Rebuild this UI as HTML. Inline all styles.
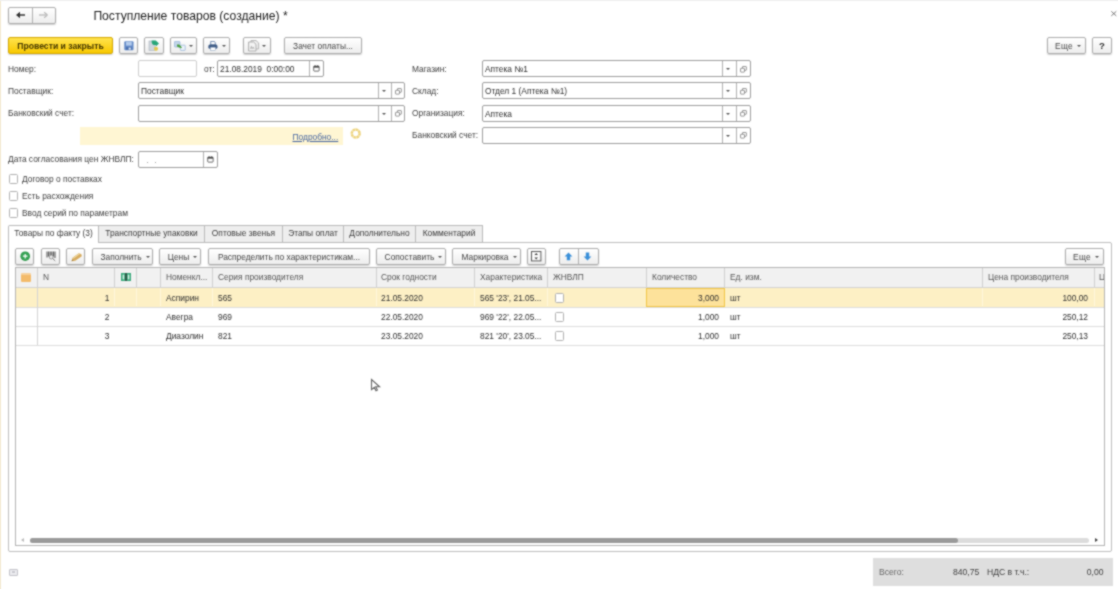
<!DOCTYPE html>
<html><head><meta charset="utf-8">
<style>
*{box-sizing:border-box;margin:0;padding:0}
html,body{width:1118px;height:589px;overflow:hidden;background:#fff}
body{position:relative;font-family:"Liberation Sans",sans-serif;font-size:8.4px;color:#404040}
#w{position:absolute;left:0;top:0;width:1118px;height:589px;overflow:hidden;background:#fff;filter:url(#bl)}
.a{position:absolute;white-space:nowrap}
.t{position:absolute;white-space:nowrap;line-height:10px;height:10px}
.btn{position:absolute;height:17px;border:1px solid #adadad;border-radius:2px;background:linear-gradient(#ffffff,#ededed);box-shadow:0 1px 1.5px rgba(0,0,0,.2);text-align:center;line-height:16.2px;white-space:nowrap;color:#464646}
.inp{position:absolute;height:17px;border:1px solid #9e9e9e;border-radius:2px;background:#fff;line-height:16.5px;padding-left:2px;white-space:nowrap;color:#2e2e2e}
.sep{position:absolute;top:0;bottom:0;width:1px;background:#b0b0b0}
.cb{position:absolute;width:9.6px;height:9.6px;border:1px solid #b0b0b0;border-radius:1.5px;background:#fff}
.tab{position:absolute;top:225px;height:18px;border:1px solid #bababa;border-left:none;background:#eeeeee;line-height:14.8px;text-align:center;color:#3c3c3c}
.hs{position:absolute;top:268px;height:20px;width:1px;background:#d0d0d0}
.h{position:absolute;top:272.3px;line-height:10px;color:#565656;white-space:nowrap}
.c{position:absolute;line-height:10px;color:#2e2e2e;white-space:nowrap}
.r{text-align:right}
.dd{display:inline-block;width:0;height:0;border-left:2px solid transparent;border-right:2px solid transparent;border-top:2.5px solid #555;vertical-align:middle;margin-left:4px;margin-top:-1px}
</style></head><body><svg width="0" height="0" style="position:absolute"><filter id="bl" x="0" y="0" width="100%" height="100%" color-interpolation-filters="sRGB"><feConvolveMatrix order="3" kernelMatrix="1 2 1 2 8 2 1 2 1" divisor="20" edgeMode="duplicate" preserveAlpha="true"/></filter></svg><div id="w">
<!-- left strip -->
<div class="a" style="left:0;top:0;width:1.3px;height:589px;background:#f3e9d0"></div>
<div class="a" style="left:0;top:0;width:1118px;height:1px;background:#efefef"></div>

<!-- nav -->
<div class="btn" style="left:8px;top:7px;width:48px;height:17px"><div class="sep" style="left:23px"></div>
<svg class="a" style="left:-0.8px;top:0px" width="46" height="14" viewBox="0 0 46 14"><path d="M10 7h7" stroke="#333" stroke-width="1.5" fill="none"/><path d="M8 7l4-3.2v6.4z" fill="#333"/><path d="M38.5 7h-7.5" stroke="#b9b9b9" stroke-width="1.3" fill="none"/><path d="M39.5 7l-3.4-2.7M39.5 7l-3.4 2.7" stroke="#b9b9b9" stroke-width="1.2" fill="none"/></svg></div>
<div class="a" style="left:93.4px;top:7.6px;font-size:12.15px;line-height:16px;color:#1c1c1c">Поступление товаров (создание) *</div>
<svg class="a" style="left:1110px;top:10px" width="8" height="8" viewBox="0 0 8 8"><path d="M1.3 1.3l5 4.6M6.3 1.3l-5 4.6" stroke="#6a6a6a" stroke-width="0.9" fill="none"/></svg>

<!-- toolbar -->
<div class="btn" style="left:8px;top:37px;width:105px;background:linear-gradient(#ffe34d,#f8c800);border-color:#d6a900;color:#453800;font-weight:bold;font-size:8.65px;line-height:17.4px">Провести и закрыть</div>
<div class="btn" style="left:119px;top:37px;width:19px"><svg class="a" style="left:4px;top:3px" width="10" height="10" viewBox="0 0 10 10"><rect x="0.3" y="0.3" width="9.2" height="9" rx="1" fill="#6289c7"/><rect x="2" y="0.8" width="5.8" height="3.8" fill="#b3cbec"/><rect x="2.2" y="6" width="5.4" height="3" fill="#4a6fae"/><rect x="4.6" y="6.6" width="2.2" height="2" fill="#dfe9f6"/></svg></div>
<div class="btn" style="left:144px;top:37px;width:20px"><svg class="a" style="left:3px;top:2px" width="12" height="12" viewBox="0 0 12 12"><rect x="1" y="1" width="6" height="9.4" fill="#cfd6dd" stroke="#aab3bd" stroke-width="0.6"/><path d="M3.6 0.6h4.2l0 -0.1 3.2 3-3.2 3v-1.6h-2.2c-1.2 0-2-1.4-2-4.3z" fill="#27a678"/><circle cx="8" cy="8.8" r="2.1" fill="#e2ca55"/></svg></div>
<div class="btn" style="left:170px;top:37px;width:27px"><svg class="a" style="left:3px;top:2.5px" width="12" height="10" viewBox="0 0 12 10"><rect x="0.4" y="0.4" width="5.6" height="5.6" rx="0.8" fill="#c3d5ea" stroke="#8fb0d6" stroke-width="0.7"/><rect x="6.4" y="4.2" width="4.8" height="5.2" rx="0.6" fill="#edf3fa" stroke="#8fb0d6" stroke-width="0.7"/><path d="M3 3.6h2.2l3 3.2-1.8.2-3.4-1.4z" fill="#4a9f3e"/></svg><span class="dd" style="position:absolute;right:3.2px;top:7.4px;margin:0"></span></div>
<div class="btn" style="left:203px;top:37px;width:27px"><svg class="a" style="left:3.8px;top:2.6px" width="10" height="10" viewBox="0 0 11 10" preserveAspectRatio="none"><path d="M3 0.4h4l1 1.4v2.2h-5z" fill="#fff" stroke="#4a6c9c" stroke-width="0.8"/><rect x="0.4" y="3.4" width="10" height="4.4" rx="1.6" fill="#3f5c86"/><rect x="2.8" y="6.2" width="5.4" height="3.4" fill="#fff" stroke="#7d95b6" stroke-width="0.5"/></svg><span class="dd" style="position:absolute;right:3.2px;top:7.4px;margin:0"></span></div>
<div class="btn" style="left:243px;top:37px;width:27.6px"><svg class="a" style="left:4px;top:1.6px" width="12" height="12" viewBox="0 0 12 12"><path d="M3 0.5h5l2.6 2.4v6h-7.6z" fill="#efefef" stroke="#b0b0b0" stroke-width="0.9"/><path d="M0.6 2h5l2.4 2.4v6.6h-7.4z" fill="#f4f4f4" stroke="#a6a6a6" stroke-width="0.9"/><path d="M1.8 8.8l1.5-3.4 1.3 2.2 .9-1.1 1.1 2.3z" fill="#b9b9b9"/></svg><span class="dd" style="position:absolute;right:3.2px;top:7.4px;margin:0"></span></div>
<div class="btn" style="left:284px;top:37px;width:78px">Зачет оплаты...</div>
<div class="btn" style="left:1047px;top:37px;width:39px;padding-left:3px;letter-spacing:0.35px">Еще<span class="dd"></span></div>
<div class="btn" style="left:1092px;top:37px;width:20px;font-weight:bold;font-size:9.6px;color:#333">?</div>

<!-- form left -->
<div class="t" style="left:8px;top:64px">Номер:</div>
<div class="inp" style="left:138px;top:60px;width:59px;border-color:#cdcdcd"></div>
<div class="t" style="left:204px;top:64px">от:</div>
<div class="inp" style="left:217px;top:60px;width:107px">21.08.2019&nbsp; 0:00:00<div class="sep" style="left:91px"></div><svg class="a" style="right:3.5px;top:4px" width="7" height="7" viewBox="0 0 8 8"><rect x="0.8" y="1.4" width="6.2" height="5.6" rx="0.8" fill="#fff" stroke="#444" stroke-width="0.9"/><rect x="0.8" y="1.2" width="6.2" height="1.8" fill="#444"/><path d="M2.4 0.2v1.4M5.4 0.2v1.4" stroke="#444" stroke-width="0.9"/></svg></div>
<div class="t" style="left:8px;top:86px">Поставщик:</div>
<div class="inp" style="left:138px;top:82.3px;width:267px">Поставщик<div class="sep" style="left:238.5px"></div><div class="sep" style="left:252px"></div><span class="dd" style="position:absolute;left:243px;top:7px;margin:0;border-top-color:#555"></span><svg class="a" style="left:256px;top:4.5px" width="7" height="7" viewBox="0 0 7 7"><rect x="2.4" y="0.5" width="4" height="3.8" rx="0.5" fill="#fff" stroke="#777" stroke-width="0.75"/><rect x="0.5" y="2.3" width="4" height="3.8" rx="0.5" fill="#fff" stroke="#777" stroke-width="0.75"/></svg></div>
<div class="t" style="left:8px;top:108px">Банковский счет:</div>
<div class="inp" style="left:138px;top:104.6px;width:267px"><div class="sep" style="left:238.5px"></div><div class="sep" style="left:252px"></div><span class="dd" style="position:absolute;left:243px;top:7px;margin:0;border-top-color:#555"></span><svg class="a" style="left:256px;top:4.5px" width="7" height="7" viewBox="0 0 7 7"><rect x="2.4" y="0.5" width="4" height="3.8" rx="0.5" fill="#fff" stroke="#777" stroke-width="0.75"/><rect x="0.5" y="2.3" width="4" height="3.8" rx="0.5" fill="#fff" stroke="#777" stroke-width="0.75"/></svg></div>
<div class="a" style="left:80px;top:127px;width:263px;height:18px;background:#fff6d3"></div>
<div class="t" style="left:292.5px;top:131.8px;color:#46659f;text-decoration:underline">Подробно...</div>
<svg class="a" style="left:349px;top:127px" width="13" height="13" viewBox="0 0 13 13"><circle cx="6.7" cy="6.5" r="3.9" fill="none" stroke="#f4e2a8" stroke-width="2.5"/><circle cx="6.7" cy="6.5" r="3.9" fill="none" stroke="#ecd27a" stroke-width="2.3" stroke-dasharray="1.6 1.46"/></svg>
<div class="t" style="left:8px;top:154px">Дата согласования цен ЖНВЛП:</div>
<div class="inp" style="left:138px;top:151px;width:80px;color:#8a8a8a"><span class="a" style="left:7.5px;top:0">.</span><span class="a" style="left:15.2px;top:0">.</span><div class="sep" style="left:64px"></div><svg class="a" style="right:3.5px;top:4px" width="7" height="7" viewBox="0 0 8 8"><rect x="0.8" y="1.4" width="6.2" height="5.6" rx="0.8" fill="#fff" stroke="#444" stroke-width="0.9"/><rect x="0.8" y="1.2" width="6.2" height="1.8" fill="#444"/><path d="M2.4 0.2v1.4M5.4 0.2v1.4" stroke="#444" stroke-width="0.9"/></svg></div>
<div class="cb" style="left:8.7px;top:174px"></div><div class="t" style="left:22px;top:174px">Договор о поставках</div>
<div class="cb" style="left:8.7px;top:191px"></div><div class="t" style="left:22px;top:191px">Есть расхождения</div>
<div class="cb" style="left:8.7px;top:208px"></div><div class="t" style="left:22px;top:208px">Ввод серий по параметрам</div>

<!-- form right -->
<div class="t" style="left:412px;top:64px">Магазин:</div>
<div class="inp" style="left:482px;top:60px;width:269px">Аптека №1<div class="sep" style="left:238.5px"></div><div class="sep" style="left:253px"></div><span class="dd" style="position:absolute;left:243px;top:7px;margin:0;border-top-color:#555"></span><svg class="a" style="left:257px;top:4.5px" width="7" height="7" viewBox="0 0 7 7"><rect x="2.4" y="0.5" width="4" height="3.8" rx="0.5" fill="#fff" stroke="#777" stroke-width="0.75"/><rect x="0.5" y="2.3" width="4" height="3.8" rx="0.5" fill="#fff" stroke="#777" stroke-width="0.75"/></svg></div>
<div class="t" style="left:412px;top:86px">Склад:</div>
<div class="inp" style="left:482px;top:82.3px;width:269px">Отдел 1 (Аптека №1)<div class="sep" style="left:238.5px"></div><div class="sep" style="left:253px"></div><span class="dd" style="position:absolute;left:243px;top:7px;margin:0;border-top-color:#555"></span><svg class="a" style="left:257px;top:4.5px" width="7" height="7" viewBox="0 0 7 7"><rect x="2.4" y="0.5" width="4" height="3.8" rx="0.5" fill="#fff" stroke="#777" stroke-width="0.75"/><rect x="0.5" y="2.3" width="4" height="3.8" rx="0.5" fill="#fff" stroke="#777" stroke-width="0.75"/></svg></div>
<div class="t" style="left:412px;top:108px">Организация:</div>
<div class="inp" style="left:482px;top:104.6px;width:269px">Аптека<div class="sep" style="left:238.5px"></div><div class="sep" style="left:253px"></div><span class="dd" style="position:absolute;left:243px;top:7px;margin:0;border-top-color:#555"></span><svg class="a" style="left:257px;top:4.5px" width="7" height="7" viewBox="0 0 7 7"><rect x="2.4" y="0.5" width="4" height="3.8" rx="0.5" fill="#fff" stroke="#777" stroke-width="0.75"/><rect x="0.5" y="2.3" width="4" height="3.8" rx="0.5" fill="#fff" stroke="#777" stroke-width="0.75"/></svg></div>
<div class="t" style="left:412px;top:130px">Банковский счет:</div>
<div class="inp" style="left:482px;top:126.6px;width:269px"><div class="sep" style="left:238.5px"></div><div class="sep" style="left:253px"></div><span class="dd" style="position:absolute;left:243px;top:7px;margin:0;border-top-color:#555"></span><svg class="a" style="left:257px;top:4.5px" width="7" height="7" viewBox="0 0 7 7"><rect x="2.4" y="0.5" width="4" height="3.8" rx="0.5" fill="#fff" stroke="#777" stroke-width="0.75"/><rect x="0.5" y="2.3" width="4" height="3.8" rx="0.5" fill="#fff" stroke="#777" stroke-width="0.75"/></svg></div>

<!-- tab panel -->
<div class="a" style="left:8px;top:242px;width:1104px;height:310px;border:1px solid #bebebe;border-radius:0 2px 2px 2px"></div>
<div class="tab" style="left:8px;width:91px;top:224.5px;height:18.5px;border-left:1px solid #bababa;border-bottom:none;background:#fff;line-height:15.2px;border-radius:2px 0 0 0">Товары по факту (3)</div>
<div class="tab" style="left:99px;width:106px">Транспортные упаковки</div>
<div class="tab" style="left:205px;width:78px">Оптовые звенья</div>
<div class="tab" style="left:283px;width:61px">Этапы оплат</div>
<div class="tab" style="left:344px;width:72px">Дополнительно</div>
<div class="tab" style="left:416px;width:67px">Комментарий</div>

<!-- table toolbar -->
<div class="btn" style="left:15px;top:248px;width:19px"><svg class="a" style="left:3.7px;top:2.4px" width="11" height="11" viewBox="0 0 11 11"><circle cx="5.2" cy="5.2" r="4.8" fill="#2c9549"/><circle cx="5.2" cy="5.2" r="3.9" fill="#37a455"/><path d="M5.2 2.9v4.6M2.9 5.2h4.6" stroke="#fff" stroke-width="1.2"/></svg></div>
<div class="btn" style="left:41px;top:248px;width:19px"><svg class="a" style="left:3.6px;top:2.4px" width="11" height="11" viewBox="0 0 11 11"><path d="M1 0.6v6M2.6 0.6v5M4.2 0.6v4M5.8 0.6v4M7.4 0.6v5M9 0.6v6.4" stroke="#5a5a5a" stroke-width="1.1"/><circle cx="5.2" cy="6" r="2" fill="#e9e9e9" stroke="#777" stroke-width="0.7"/><path d="M6.6 7.4l2.6 2.4" stroke="#777" stroke-width="1"/></svg></div>
<div class="btn" style="left:66px;top:248px;width:19px"><svg class="a" style="left:4px;top:3px" width="11" height="11" viewBox="0 0 11 11"><path d="M0.6 9.2l1-3.4 6.2-4.6 2.6 1 0.4 2-6.6 4.6z" fill="#d6ab5e"/><path d="M1.6 5.8l6.2-4.6 1.6 0.6-6.8 5z" fill="#ecd39a"/><path d="M0.6 9.2l0.5-1.7 1.3 1.1z" fill="#8f7036"/></svg></div>
<div class="btn" style="left:92px;top:248px;width:61px;padding-left:5px">Заполнить<span class="dd"></span></div>
<div class="btn" style="left:159px;top:248px;width:42px;padding-left:5px">Цены<span class="dd"></span></div>
<div class="btn" style="left:208px;top:248px;width:162px">Распределить по характеристикам...</div>
<div class="btn" style="left:376px;top:248px;width:70px;padding-left:5px">Сопоставить<span class="dd"></span></div>
<div class="btn" style="left:452px;top:248px;width:69px;padding-left:5px">Маркировка<span class="dd"></span></div>
<div class="btn" style="left:527px;top:248px;width:19px"><svg class="a" style="left:3px;top:2.2px" width="11" height="11" viewBox="0 0 11 11"><rect x="0.5" y="0.5" width="9.4" height="9.4" fill="#fafafa" stroke="#5c5c5c" stroke-width="1"/><path d="M5.2 1.9l1.7 2h-3.4zM5.2 8.5l1.7-2h-3.4z" fill="#3c3c3c"/></svg></div>
<div class="btn" style="left:559px;top:248px;width:40px"><div class="sep" style="left:18px"></div><svg class="a" style="left:4.4px;top:3px" width="9" height="9" viewBox="0 0 9 9"><path d="M4.5 0.4l3.9 4h-2.2v3.8h-3.4v-3.8h-2.2z" fill="#3b90d9"/></svg><svg class="a" style="left:23.4px;top:3px" width="9" height="9" viewBox="0 0 9 9"><path d="M4.5 8.4l3.9-4h-2.2v-3.8h-3.4v3.8h-2.2z" fill="#3b90d9"/></svg></div>
<div class="btn" style="left:1065px;top:248px;width:39px;padding-left:3px;letter-spacing:0.35px">Еще<span class="dd"></span></div>

<!-- table -->
<div class="a" style="left:15px;top:267px;width:1090px;height:279px;border:1px solid #b4b4b4"></div>
<div class="a" style="left:16px;top:268px;width:1088px;height:20px;background:#f1f1f1;border-bottom:1px solid #d2d2d2"></div>
<div class="a" style="left:16px;top:288px;width:1088px;height:18.5px;background:#fdf0c5"></div>
<div class="a" style="left:16px;top:306.5px;width:1088px;height:1px;background:#dddddd"></div>
<div class="a" style="left:16px;top:325.5px;width:1088px;height:1px;background:#dddddd"></div>
<div class="a" style="left:16px;top:344.5px;width:1088px;height:1px;background:#dddddd"></div>
<div class="a" style="left:114px;top:288px;width:1px;height:18px;background:#fff7dc"></div><div class="a" style="left:136px;top:288px;width:1px;height:18px;background:#fff7dc"></div><div class="a" style="left:160px;top:288px;width:1px;height:18px;background:#fff7dc"></div><div class="a" style="left:212px;top:288px;width:1px;height:18px;background:#fff7dc"></div><div class="a" style="left:376px;top:288px;width:1px;height:18px;background:#fff7dc"></div><div class="a" style="left:474px;top:288px;width:1px;height:18px;background:#fff7dc"></div><div class="a" style="left:547px;top:288px;width:1px;height:18px;background:#fff7dc"></div><div class="a" style="left:982px;top:288px;width:1px;height:18px;background:#fff7dc"></div><div class="a" style="left:1094px;top:288px;width:1px;height:18px;background:#fff7dc"></div><div class="a" style="left:646px;top:288px;width:79px;height:19px;background:#fde29b;border:1px solid #f2c645"></div>
<div class="a" style="left:37px;top:288px;width:1px;height:57px;background:#d4d4d4"></div>

<div class="hs" style="left:37px"></div><div class="hs" style="left:136px"></div><div class="hs" style="left:160px"></div><div class="hs" style="left:212px"></div><div class="hs" style="left:376px"></div><div class="hs" style="left:474px"></div><div class="hs" style="left:547px"></div><div class="hs" style="left:646px"></div><div class="hs" style="left:724px"></div><div class="hs" style="left:982px"></div><div class="hs" style="left:1094px"></div>
<div class="a" style="left:21.3px;top:273px;width:9.5px;height:9px;background:#f3bb6b;border-radius:1px;border-top:2px solid #f7d09a"></div><svg class="a" style="left:121px;top:273px" width="10" height="8" viewBox="0 0 10 8"><rect width="10" height="8" fill="#3aa97c"/><rect x="4" y="0" width="2" height="8" fill="#2c5a48"/><rect x="1.6" y="1.6" width="1.6" height="4.8" fill="#d9f0e6"/><rect x="6.8" y="1.6" width="1.6" height="4.8" fill="#d9f0e6"/></svg><div class="hs" style="left:114px"></div><div class="h" style="left:43px">N</div><div class="h" style="left:166px">Номенкл...</div><div class="h" style="left:218px">Серия производителя</div><div class="h" style="left:381px">Срок годности</div><div class="h" style="left:480px">Характеристика</div><div class="h" style="left:553px">ЖНВЛП</div><div class="h" style="left:652px">Количество</div><div class="h" style="left:730px">Ед. изм.</div><div class="h" style="left:988px">Цена производителя</div><div class="h" style="left:1099px;width:5px;overflow:hidden">Ц</div>

<!-- rows -->
<div class="c r" style="left:60px;width:49.3px;top:292.6px">1</div><div class="c" style="left:166px;top:292.6px">Аспирин</div><div class="c" style="left:218px;top:292.6px">565</div><div class="c" style="left:381px;top:292.6px">21.05.2020</div><div class="c" style="left:480px;top:292.6px">565 '23', 21.05...</div><div class="cb" style="left:554.6px;top:293px"></div><div class="c r" style="left:660px;width:59px;top:292.6px">3,000</div><div class="c" style="left:730px;top:292.6px">шт</div><div class="c r" style="left:1000px;width:88px;top:292.6px">100,00</div>
<div class="c r" style="left:60px;width:49.3px;top:311.6px">2</div><div class="c" style="left:166px;top:311.6px">Авегра</div><div class="c" style="left:218px;top:311.6px">969</div><div class="c" style="left:381px;top:311.6px">22.05.2020</div><div class="c" style="left:480px;top:311.6px">969 '22', 22.05...</div><div class="cb" style="left:554.6px;top:312px"></div><div class="c r" style="left:660px;width:59px;top:311.6px">1,000</div><div class="c" style="left:730px;top:311.6px">шт</div><div class="c r" style="left:1000px;width:88px;top:311.6px">250,12</div>
<div class="c r" style="left:60px;width:49.3px;top:330.6px">3</div><div class="c" style="left:166px;top:330.6px">Диазолин</div><div class="c" style="left:218px;top:330.6px">821</div><div class="c" style="left:381px;top:330.6px">23.05.2020</div><div class="c" style="left:480px;top:330.6px">821 '20', 23.05...</div><div class="cb" style="left:554.6px;top:331px"></div><div class="c r" style="left:660px;width:59px;top:330.6px">1,000</div><div class="c" style="left:730px;top:330.6px">шт</div><div class="c r" style="left:1000px;width:88px;top:330.6px">250,13</div>

<!-- scrollbar -->
<div class="a" style="left:30px;top:538px;width:1059px;height:5px;border-radius:3px;background:#dcdcdc"></div>
<div class="a" style="left:30px;top:538px;width:928px;height:5px;border-radius:3px;background:#9a9a9a"></div>
<div class="a" style="left:21px;top:538px;width:0;height:0;border-top:2.5px solid transparent;border-bottom:2.5px solid transparent;border-right:3px solid #bbb"></div>
<div class="a" style="left:1095px;top:538px;width:0;height:0;border-top:2.5px solid transparent;border-bottom:2.5px solid transparent;border-left:3px solid #444"></div>

<!-- footer -->
<div class="a" style="left:873px;top:558px;width:239.5px;height:27.5px;background:#dedede"></div>
<div class="t" style="left:879px;top:567px;font-size:8.6px;color:#666">Всего:</div>
<div class="t r" style="left:920px;width:59.3px;top:567px;font-size:8.6px">840,75</div>
<div class="t" style="left:987px;top:567px;font-size:8.6px">НДС в т.ч.:</div>
<div class="t r" style="left:1050px;width:53.5px;top:567px;font-size:8.6px">0,00</div>
<div class="a" style="left:9.3px;top:568.6px;width:9px;height:7.4px;border:1.2px solid #c3c3c9;border-radius:1px;background:#ececf0"><div class="a" style="left:2px;top:1.5px;width:2.8px;height:2.4px;background:#c9c9cf"></div></div>

<!-- cursor -->
<svg class="a" style="left:368px;top:376px" width="16" height="18" viewBox="0 0 16 18"><path d="M3.5 3.5v10.2l2.8-2.3 1.7 3.4 1.4-.7-1.7-3.3h3.9z" fill="#fff" stroke="#666" stroke-width="1.1"/></svg>
</div></body></html>
